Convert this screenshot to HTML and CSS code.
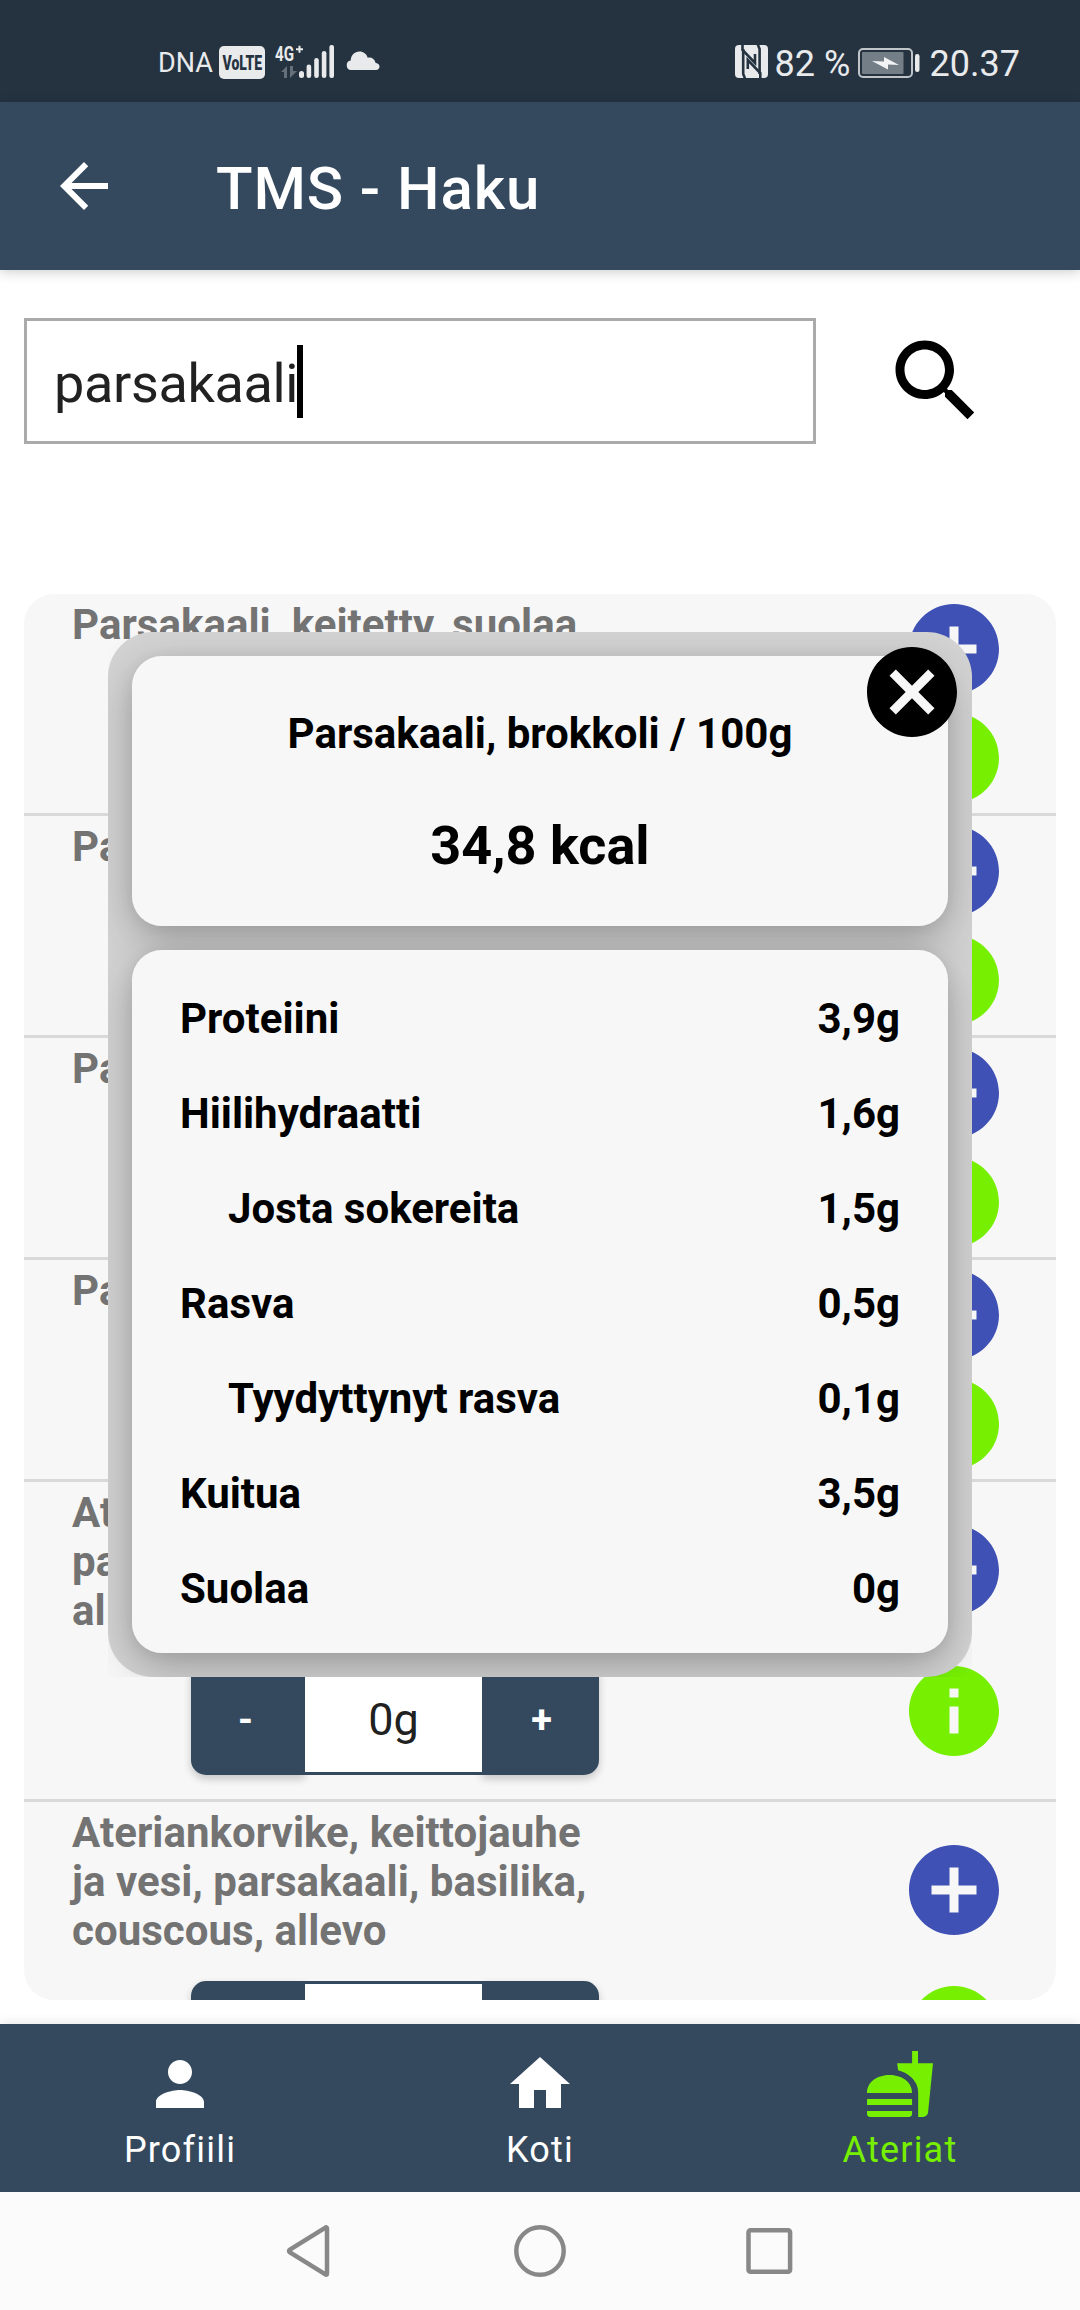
FILE: index.html
```html
<!DOCTYPE html>
<html lang="fi">
<head>
<meta charset="utf-8">
<title>TMS - Haku</title>
<link rel="stylesheet" href="styles.css">
</head>
<body>
<svg class="defs" width="0" height="0">
  <symbol id="add" viewBox="2 2 20 20"><path d="M12 2C6.48 2 2 6.48 2 12s4.48 10 10 10 10-4.48 10-10S17.52 2 12 2zm5 11h-4v4h-2v-4H7v-2h4V7h2v4h4v2z"/></symbol>
  <symbol id="info" viewBox="2 2 20 20"><path d="M12 2C6.48 2 2 6.48 2 12s4.48 10 10 10 10-4.48 10-10S17.52 2 12 2zm1 15h-2v-6h2v6zm0-8h-2V7h2v2z"/></symbol>
</svg>
<div class="screen">
  <div class="status">
    <div class="status-left">
      <span class="carrier">DNA</span>
      <svg class="volte" width="46" height="33" viewBox="0 0 46 33"><rect width="46" height="33" rx="5" fill="#e8eaec"/><text x="3.500" y="24" textLength="39.500" lengthAdjust="spacingAndGlyphs">VoLTE</text></svg>
      <svg class="signal" width="60" height="36" viewBox="0 0 60 36">
        <text class="net" x="0" y="16.500" textLength="19" lengthAdjust="spacingAndGlyphs">4G</text>
        <path d="M21 5.200h7M24.500 1.700v7" stroke="#e8eaec" stroke-width="2" fill="none"/>
        <g fill="#66707a"><path d="M6 28l6-6v12H9v-6zM15 22v12l7-7h-4v-5z"/></g>
        <g fill="#e8eaec"><rect x="24" y="27" width="5" height="7" rx="2.500"/><rect x="31.600" y="20.500" width="4.600" height="13.500" rx="2.300"/><rect x="39.200" y="14" width="4.600" height="20" rx="2.300"/><rect x="46.800" y="7" width="4.600" height="27" rx="2.300"/><rect x="54.400" y="1" width="4.600" height="33" rx="2"/></g>
      </svg>
      <svg class="cloud" width="34" height="20" viewBox="0 0 34 20"><path fill="#e8eaec" d="M5 19a4.800 4.800 0 0 1-.3-9.500C5 4 8.500.500 13.500.500c4 0 7 2.300 8.200 6.200 4-.8 7 1.400 7.800 5C32.500 12.300 33.500 14 33.500 15.500c0 2-1.500 3.500-3.500 3.500z"/></svg>
    </div>
    <div class="status-right">
      <svg class="nfc" width="34" height="35" viewBox="0 0 34 35"><rect x="0" y="1" width="33" height="33" rx="4" fill="#e8eaec"/><path d="M7.500 0v6L20 19V10M25.300 35v-6L12.800 16v9" fill="none" stroke="#253341" stroke-width="2.600"/><path d="M8.200 5v25l2 5M24.600 30V5l-2-5" fill="none" stroke="#253341" stroke-width="2.600"/></svg>
      <span class="battery-text">82 %</span>
      <svg class="battery" width="62" height="30" viewBox="0 0 62 30"><rect x="1" y="1" width="53" height="28" rx="4" fill="none" stroke="#c0c5c9" stroke-width="2"/><rect x="4" y="4" width="41.500" height="22" rx="1" fill="#747e86"/><path d="M14 13l12 .5V9l15 8-11-.5v5z" fill="#f2f3f4"/><rect x="57" y="6" width="4.500" height="18" rx="2.200" fill="#e8eaec"/></svg>
      <span class="clock">20.37</span>
    </div>
  </div>

  <header class="appbar">
    <svg width="72" height="72" viewBox="0 0 24 24" fill="#fff"><path d="M20 11H7.830l5.590-5.590L12 4l-8 8 8 8 1.410-1.410L7.830 13H20v-2z"/></svg>
    <h1 class="title">TMS - Haku</h1>
  </header>

  <main class="content">
    <div class="search">
      <div class="field"><span>parsakaali</span><i class="caret"></i></div>
      <svg width="108" height="108" viewBox="0 0 24 24"><path d="M15.500 14h-.79l-.28-.27C15.410 12.590 16 11.110 16 9.500 16 5.910 13.090 3 9.500 3S3 5.910 3 9.500 5.910 16 9.500 16c1.610 0 3.090-.59 4.230-1.570l.27.28v.79l5 4.990L20.490 19l-4.990-5zm-6 0C7.010 14 5 11.990 5 9.500S7.010 5 9.500 5 14 7.010 14 9.500 11.990 14 9.500 14z"/></svg>
    </div>

    <div class="results">
      <div class="item">
        <p class="name">Parsakaali, keitetty, suolaa</p>
        <div class="actions"><svg class="blue"><use href="#add"/></svg><svg class="green"><use href="#info"/></svg></div>
      </div>
      <div class="item">
        <p class="name">Parsakaali</p>
        <div class="actions"><svg class="blue"><use href="#add"/></svg><svg class="green"><use href="#info"/></svg></div>
      </div>
      <div class="item">
        <p class="name">Parsakaali</p>
        <div class="actions"><svg class="blue"><use href="#add"/></svg><svg class="green"><use href="#info"/></svg></div>
      </div>
      <div class="item">
        <p class="name">Parsakaali</p>
        <div class="actions"><svg class="blue"><use href="#add"/></svg><svg class="green"><use href="#info"/></svg></div>
      </div>
      <div class="item tall">
        <div class="item-main"><p class="name">Ateriankorvike,<br>parsakaali,<br>allevo</p><div class="stepper"><b class="step left">-</b><span class="amount">0g</span><b class="step right">+</b></div></div>
        <div class="actions"><svg class="blue"><use href="#add"/></svg><svg class="green"><use href="#info"/></svg></div>
      </div>
      <div class="item tall">
        <div class="item-main"><p class="name">Ateriankorvike, keittojauhe<br>ja vesi, parsakaali, basilika,<br>couscous, allevo</p><div class="stepper"><b class="step left"></b><span class="amount"></span><b class="step right"></b></div></div>
        <div class="actions"><svg class="blue"><use href="#add"/></svg><svg class="green"><use href="#info"/></svg></div>
      </div>
    </div>
  </main>

  <nav class="tabs">
    <div class="tab"><svg width="72" height="72" viewBox="0 0 24 24"><path d="M12 12c2.210 0 4-1.790 4-4s-1.790-4-4-4-4 1.790-4 4 1.790 4 4 4zm0 2c-2.670 0-8 1.340-8 4v2h16v-2c0-2.660-5.330-4-8-4z"/></svg><span>Profiili</span></div>
    <div class="tab"><svg width="72" height="72" viewBox="0 0 24 24"><path d="M10 20v-6h4v6h5v-8h3L12 3 2 12h3v8z"/></svg><span>Koti</span></div>
    <div class="tab active"><svg width="72" height="72" viewBox="0 0 24 24"><path d="M18.060 22.990h1.660c.84 0 1.530-.64 1.630-1.460L23 5.050h-5V1h-1.970v4.050h-4.970l.3 2.340c1.710.47 3.310 1.320 4.270 2.260 1.440 1.420 2.430 2.890 2.430 5.290v8.050zM1 21.990V21h15.030v.99c0 .55-.45 1-1.010 1H2.010c-.56 0-1.010-.45-1.010-1zm15.030-7c0-8-15.030-8-15.030 0h15.030zM1.020 17h15v2h-15z"/></svg><span>Ateriat</span></div>
  </nav>

  <div class="sysnav">
    <svg width="52" height="56" viewBox="0 0 52 56"><path d="M44 5.500v45q0 2-2 .6L7 29.500q-2-1.500 0-3L42 4.900q2-1.400 2 .6z"/></svg>
    <svg width="56" height="56" viewBox="0 0 56 56"><circle cx="28" cy="28" r="23.700"/></svg>
    <svg width="52" height="56" viewBox="0 0 52 56"><rect x="3.500" y="7.200" width="41.600" height="41.600" rx="2"/></svg>
  </div>

  <section class="modal">
    <div class="panel head">
      <p class="food">Parsakaali, brokkoli / 100g</p>
      <p class="kcal">34,8 kcal</p>
    </div>
    <div class="panel facts">
      <div class="fact"><span>Proteiini</span><span>3,9g</span></div>
      <div class="fact"><span>Hiilihydraatti</span><span>1,6g</span></div>
      <div class="fact sub"><span>Josta sokereita</span><span>1,5g</span></div>
      <div class="fact"><span>Rasva</span><span>0,5g</span></div>
      <div class="fact sub"><span>Tyydyttynyt rasva</span><span>0,1g</span></div>
      <div class="fact"><span>Kuitua</span><span>3,5g</span></div>
      <div class="fact"><span>Suolaa</span><span>0g</span></div>
    </div>
    <svg class="close" viewBox="2 2 20 20"><path d="M12 2C6.470 2 2 6.470 2 12s4.470 10 10 10 10-4.470 10-10S17.530 2 12 2zm5 13.590L15.590 17 12 13.410 8.410 17 7 15.590 10.590 12 7 8.410 8.410 7 12 10.590 15.590 7 17 8.410 13.410 12 17 15.590z"/></svg>
  </section>
</div>
</body>
</html>
```
FILE: styles.css
```css
* { box-sizing: border-box; }
body { margin: 0; font-family: Roboto, sans-serif; background: #fff; }
p, h1 { margin: 0; }
svg { display: block; flex: none; }
.defs { position: absolute; }

.screen {
  position: relative;
  width: 1080px;
  height: 2310px;
  overflow: hidden;
  display: flex;
  flex-direction: column;
}

/* system status bar */
.status {
  height: 102px;
  flex: none;
  background: #253341;
  color: #e8eaec;
  display: flex;
  justify-content: space-between;
  padding: 44px 60px 0 158px;
  white-space: nowrap;
}
.status-left, .status-right { display: flex; height: 36px; }
.carrier { font-size: 27px; line-height: 36px; width: 61px; padding-top: 1px; }
.volte { margin-top: 2px; }
.volte text { font: 900 21px Roboto, sans-serif; fill: #253341; }
.signal { margin-left: 10px; }
.net { font: 700 21px Roboto, sans-serif; fill: #e8eaec; }
.cloud { margin: 7px 0 0 11px; }
.nfc { margin-right: 6px; }
.battery-text, .clock { font-size: 36px; line-height: 40px; }
.battery-text { width: 83px; }
.battery { margin: 4px 10px 0 0; }

/* app bar */
.appbar {
  height: 168px;
  flex: none;
  background: #34495e;
  color: #fff;
  display: flex;
  align-items: center;
  gap: 96px;
  padding: 0 48px;
  box-shadow: 0 2px 12px rgba(0, 0, 0, .2);
}
.title { font-size: 60px; font-weight: 500; line-height: 70px; padding-top: 5px; letter-spacing: .9px; }

.content { height: 1754px; flex: none; padding: 48px 24px 24px; }

.search { display: flex; align-items: center; gap: 66px; }
.field {
  width: 792px;
  height: 126px;
  border: 3px solid #aaa;
  display: flex;
  align-items: center;
  padding-left: 27px;
  font-size: 54px;
  line-height: 64px;
  letter-spacing: -.35px;
  color: #212121;
}
.field span { padding-top: 5px; }
.caret { width: 6px; height: 73px; background: #000; margin-left: -1px; }

/* result list */
.results {
  margin-top: 150px;
  height: 1406px;
  border-radius: 30px;
  background: #f7f7f7;
  overflow: hidden;
}
.item {
  height: 222px;
  border-bottom: 3px solid #d9d9d9;
  display: flex;
  justify-content: space-between;
  padding: 6px 57px 0 48px;
}
.item.tall { height: 320px; }
.name {
  font-size: 42px;
  font-weight: 700;
  line-height: 49px;
  letter-spacing: .04px;
  color: #737373;
  white-space: nowrap;
}
.stepper {
  width: 408px;
  height: 114px;
  margin: 26px 0 0 119px;
  display: flex;
}
.step {
  width: 114px;
  padding-right: 5px;
  background: #34495e;
  color: #fff;
  font-size: 38px;
  line-height: 118px;
  text-align: center;
  box-shadow: 0 4px 8px rgba(0, 0, 0, .2);
}
.step.left { border-radius: 15px 0 0 15px; }
.step.right { width: 117px; padding: 0 0 0 2px; border-radius: 0 15px 15px 0; }
.amount {
  position: relative;
  flex: 1;
  border: solid #34495e;
  border-width: 3px 0;
  background: #fff;
  color: #212121;
  font-size: 45px;
  line-height: 112px;
  text-align: center;
}
.actions {
  display: flex;
  flex-direction: column;
  justify-content: space-between;
  padding: 4px 0 10px;
}
.tall .actions { padding: 37px 0 43px; }
.actions svg { width: 90px; height: 90px; }
.blue { fill: #3f51b5; }
.green { fill: #76f000; }

/* bottom tabs */
.tabs {
  height: 168px;
  flex: none;
  background: #34495e;
  display: flex;
  box-shadow: 0 0 12px rgba(0, 0, 0, .12);
}
.tab {
  flex: 1;
  display: flex;
  flex-direction: column;
  align-items: center;
  padding-top: 24px;
  fill: #fff;
  color: #fff;
  font-size: 36px;
  line-height: 42px;
  letter-spacing: 1.2px;
}
.tab span { margin-top: 9px; }
.tab.active { fill: #76f000; color: #76f000; }

.sysnav {
  position: relative;
  height: 118px;
  flex: none;
  background: #fbfbfb;
  display: flex;
  justify-content: center;
  align-items: center;
  gap: 177px;
  fill: none;
  stroke: #888;
  stroke-width: 4.500px;
}

/* nutrition dialog */
.modal {
  position: absolute;
  left: 108px;
  top: 632px;
  width: 864px;
  height: 1045px;
  padding: 24px;
  overflow: hidden;
  isolation: isolate;
  display: flex;
  flex-direction: column;
  gap: 24px;
  color: #000;
  font-size: 42px;
  font-weight: 700;
  line-height: 49px;
}
.modal::before {
  content: "";
  position: absolute;
  inset: 0;
  z-index: -1;
  border-radius: 45px;
  background: #d3d3d3;
}
.panel { position: relative; border-radius: 30px; background: #f7f7f7; }
.panel::before {
  content: "";
  position: absolute;
  inset: 0;
  z-index: -1;
  border-radius: 30px;
  box-shadow: 0 14px 44px rgba(0, 0, 0, .26), 0 2px 16px rgba(0, 0, 0, .06);
}
.head { height: 270px; padding-top: 53px; text-align: center; }
.kcal { font-size: 54px; line-height: 63px; margin-top: 56px; }
.facts { height: 703px; padding: 21px 48px 0; }
.fact { height: 95px; display: flex; align-items: center; justify-content: space-between; }
.sub { padding-left: 48px; }
.close { position: absolute; left: 759px; top: 15px; width: 90px; height: 90px; }
```
